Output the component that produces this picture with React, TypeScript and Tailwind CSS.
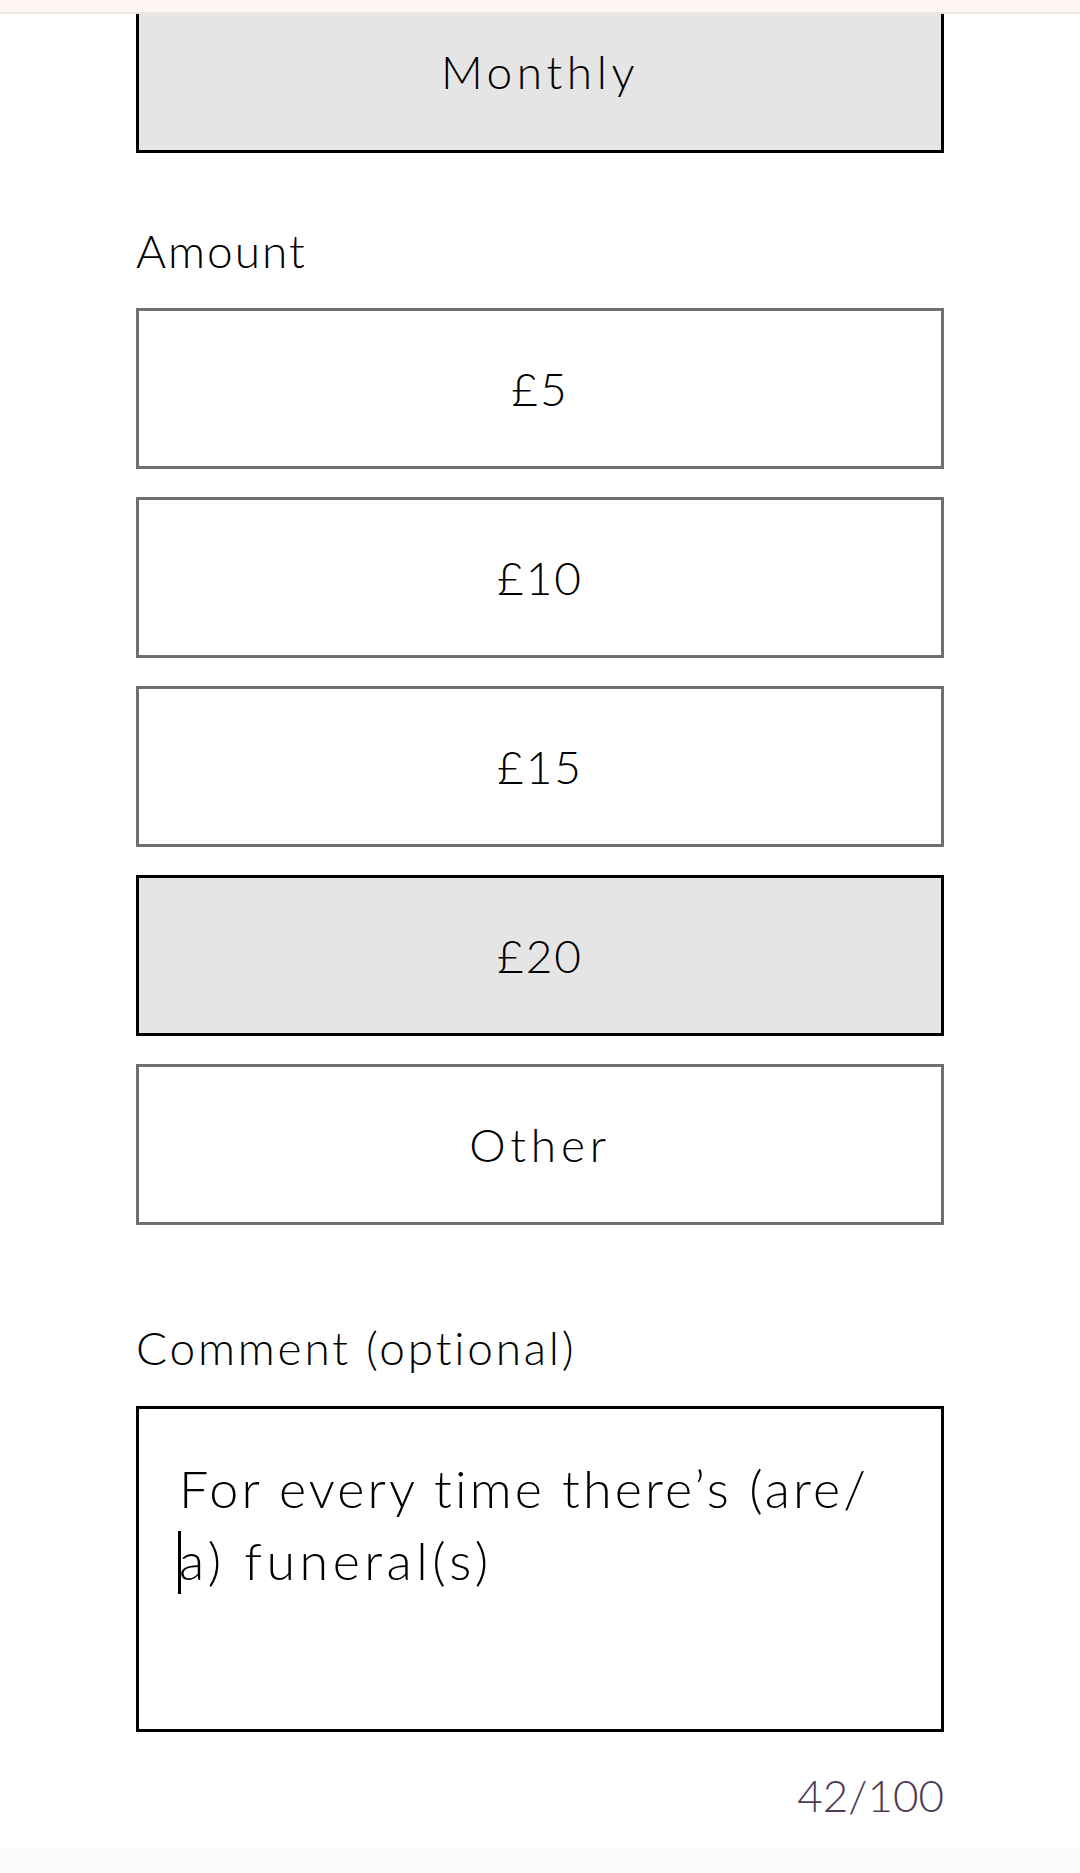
import React from 'react';

const amounts = [
  { label: '£5', selected: false },
  { label: '£10', selected: false },
  { label: '£15', selected: false },
  { label: '£20', selected: true },
  { label: 'Other', selected: false },
];

export default function App() {
  return (
    <div className="flex h-[1873px] w-full flex-col bg-white font-['Lato','Noto_Sans',sans-serif] font-light text-black">
      {/* Sticky header edge */}
      <div className="h-[14px] border-b-2 border-[#efe6e5] bg-[#fdf6f3]" />

      <div className="flex flex-col px-[136px]">
        {/* Frequency (selected, scrolled partly out of view) */}
        <div className="flex h-[139px] items-center justify-center border-x-[3px] border-b-[3px] border-black bg-[#e5e5e5] pb-[20px] text-[46px] leading-[1.2] tracking-[4.6px]">
          Monthly
        </div>

        <label className="mt-[70px] text-[46px] leading-[1.2] tracking-[2px]">Amount</label>

        <div className="mt-[30px] flex flex-col gap-[28px]">
          {amounts.map((a) => (
            <button
              key={a.label}
              className={`flex h-[161px] items-center justify-center border-[3px] text-[46px] leading-[1.2] ${
                a.label === 'Other' ? 'tracking-[4.8px]' : 'tracking-[2px]'
              } ${a.selected ? 'border-black bg-[#e5e5e5]' : 'border-[#6f6f6f] bg-white'}`}
            >
              {a.label}
            </button>
          ))}
        </div>

        <label className="mt-[95px] text-[46px] leading-[1.2] tracking-[2.8px]">Comment (optional)</label>

        <div className="mt-[31px] h-[326px] border-[3px] border-black px-[40px] pt-[43px] text-[52px] leading-[72px]">
          <div className="whitespace-nowrap tracking-[3.1px]">For every time there’s (are/</div>
          <div className="relative whitespace-nowrap tracking-[4.5px]">
            <span className="absolute left-[-1px] top-[7px] h-[63px] w-[3px] bg-black" />
            a) funeral(s)
          </div>
        </div>

        <div className="mt-[37px] text-right text-[44px] leading-[1.2] text-[#4d3b55]">42/100</div>
      </div>

      <div className="flex-1" />
      <div className="h-[26px] bg-[#fafafa]" />
    </div>
  );
}
